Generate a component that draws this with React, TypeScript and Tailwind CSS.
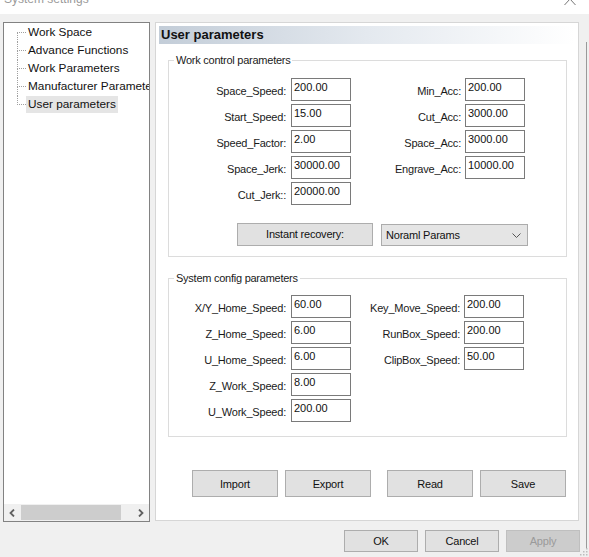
import React from 'react';

// Tree items on the left side of the settings dialog
const treeItems = [
  { label: 'Work Space' },
  { label: 'Advance Functions' },
  { label: 'Work Parameters' },
  { label: 'Manufacturer Parameters' },
  { label: 'User parameters', selected: true },
];

const workLeft = [
  ['Space_Speed:', '200.00'],
  ['Start_Speed:', '15.00'],
  ['Speed_Factor:', '2.00'],
  ['Space_Jerk:', '30000.00'],
  ['Cut_Jerk::', '20000.00'],
];

const workRight = [
  ['Min_Acc:', '200.00'],
  ['Cut_Acc:', '3000.00'],
  ['Space_Acc:', '3000.00'],
  ['Engrave_Acc:', '10000.00'],
];

const sysLeft = [
  ['X/Y_Home_Speed:', '60.00'],
  ['Z_Home_Speed:', '6.00'],
  ['U_Home_Speed:', '6.00'],
  ['Z_Work_Speed:', '8.00'],
  ['U_Work_Speed:', '200.00'],
];

const sysRight = [
  ['Key_Move_Speed:', '200.00'],
  ['RunBox_Speed:', '200.00'],
  ['ClipBox_Speed:', '50.00'],
];

// One "label: [value]" row
const Field = ({ label, value, labelWidth, gap }: { label: string; value: string; labelWidth: string; gap: string }) => (
  <div className="flex h-[23px]">
    <div className={`${labelWidth} ${gap} flex items-center justify-end pt-[3px] whitespace-nowrap tracking-[-0.2px] text-[#1a1a1a]`}>
      {label}
    </div>
    <div className="w-[60px] h-[23px] border border-[#7a7a7a] bg-white px-[2px] pt-[1px] leading-[14px] text-[#111]">
      {value}
    </div>
  </div>
);

const Column = ({ rows, labelWidth, gap }: { rows: string[][]; labelWidth: string; gap: string }) => (
  <div className="flex flex-col gap-[3px]">
    {rows.map(([l, v]) => (
      <Field key={l} label={l} value={v} labelWidth={labelWidth} gap={gap} />
    ))}
  </div>
);

const Chevron = ({ dir }: { dir: 'left' | 'right' }) => (
  <svg width="7" height="8" viewBox="0 0 7 8">
    <path
      d={dir === 'left' ? 'M5 0.5 L1.5 4 L5 7.5' : 'M2 0.5 L5.5 4 L2 7.5'}
      fill="none"
      stroke="#606060"
      strokeWidth="1.8"
    />
  </svg>
);

const App = () => {
  const btn = 'flex items-center justify-center bg-[#e1e1e1] border border-[#adadad] text-[#111] tracking-[-0.2px]';

  return (
    <div className="relative w-[589px] h-[557px] overflow-hidden bg-[#f0f0f0] font-['Liberation_Sans',Arial,sans-serif] text-[11px] text-black">
      {/* Window title strip (cut off at the top) */}
      <div className="flex justify-between h-[14px] bg-white overflow-hidden pl-[4px] pr-[12px]">
        <span className="block text-[12px] leading-[14px] mt-[-8px] text-[#9a9a9a]">System settings</span>
        <svg width="14" height="6" viewBox="0 0 14 6">
          <path d="M7 -1 L1.5 5 M7 -1 L12.5 5" stroke="#777" strokeWidth="1" fill="none" />
        </svg>
      </div>

      <div className="flex mt-[8px] pl-[3px]">
        {/* Tree view */}
        <div className="w-[147px] h-[500px] border border-[#828282] bg-white flex flex-col">
          <div className="flex-1 overflow-hidden pt-[1px] text-[11.8px] text-[#111]">
            {treeItems.map((item, i) => (
              <div key={item.label} className="flex h-[18px] whitespace-nowrap">
                <div className="w-[22px] h-full shrink-0">
                  <div className="ml-[13px] w-[9px] h-full flex flex-col">
                    <div
                      className={`h-[9px] border-b border-dotted border-[#a0a0a0] ${
                        i > 0 ? 'border-l' : ''
                      }`}
                    />
                    <div
                      className={`flex-1 border-dotted border-[#a0a0a0] ${
                        i < treeItems.length - 1 ? 'border-l' : ''
                      }`}
                    />
                  </div>
                </div>
                <span
                  className={`h-[17px] leading-[17px] px-[2px] ${
                    item.selected ? 'bg-[#e5e5e5]' : ''
                  }`}
                >
                  {item.label}
                </span>
              </div>
            ))}
          </div>
          {/* Horizontal scrollbar */}
          <div className="flex h-[17px] bg-[#f0f0f0]">
            <div className="w-[17px] flex items-center justify-center">
              <Chevron dir="left" />
            </div>
            <div className="flex-1 py-[1px]">
              <div className="w-[100px] h-full bg-[#cdcdcd]" />
            </div>
            <div className="w-[17px] flex items-center justify-center">
              <Chevron dir="right" />
            </div>
          </div>
        </div>

        {/* Settings page */}
        <div className="ml-[5px] w-[424px] h-[499px] border border-[#d6d6d6] bg-white p-[3px] flex flex-col">
          <div className="h-[18px] bg-linear-to-r from-[#c3cdd8] via-[#e4e9ef] to-white pl-[2px] text-[13px] font-bold leading-[18px] text-[#111]">
            User parameters
          </div>

          <fieldset className="ml-[9px] mt-[10px] w-[399px] border border-[#dcdcdc] pb-[10px]">
            <legend className="ml-[5px] px-[2px] leading-[13px] tracking-[-0.25px] text-[#1a1a1a]">Work control parameters</legend>
            <div className="flex pt-[11px]">
              <Column rows={workLeft} labelWidth="w-[117px]" gap="mr-[5px]" />
              <Column rows={workRight} labelWidth="w-[110px]" gap="mr-[4px]" />
            </div>
            <div className="flex items-start mt-[18px]">
              <div className={`${btn} ml-[68px] w-[136px] h-[23px]`}>Instant recovery:</div>
              <div className="ml-[8px] mt-[1px] w-[147px] h-[22px] flex items-center justify-between bg-[#e5e5e5] border border-[#acacac] pl-[4px] pr-[6px] text-[#111]">
                <span className="tracking-[-0.2px]">Noraml Params</span>
                <svg width="9" height="5" viewBox="0 0 9 5">
                  <path d="M0.5 0.5 L4.5 4.5 L8.5 0.5" fill="none" stroke="#555" strokeWidth="1" />
                </svg>
              </div>
            </div>
          </fieldset>

          <fieldset className="ml-[9px] mt-[15px] w-[399px] border border-[#dcdcdc] pb-[14px]">
            <legend className="ml-[5px] px-[2px] leading-[13px] tracking-[-0.25px] text-[#1a1a1a]">System config parameters</legend>
            <div className="flex pt-[10px]">
              <Column rows={sysLeft} labelWidth="w-[117px]" gap="mr-[5px]" />
              <Column rows={sysRight} labelWidth="w-[109px]" gap="mr-[4px]" />
            </div>
          </fieldset>

          <div className="flex ml-[33px] mt-[33px]">
            <div className={`${btn} w-[86px] h-[27px] pt-[2px]`}>Import</div>
            <div className={`${btn} w-[86px] h-[27px] pt-[2px] ml-[7px]`}>Export</div>
            <div className={`${btn} w-[86px] h-[27px] pt-[2px] ml-[16px]`}>Read</div>
            <div className={`${btn} w-[86px] h-[27px] pt-[2px] ml-[7px]`}>Save</div>
          </div>
        </div>
      </div>

      {/* Dialog buttons */}
      <div className="flex justify-end gap-[7px] mt-[8px] pr-[9px]">
        <div className={`${btn} w-[74px] h-[22px]`}>OK</div>
        <div className={`${btn} w-[74px] h-[22px]`}>Cancel</div>
        <div className="flex items-center justify-center w-[74px] h-[22px] bg-[#cccccc] border border-[#bfbfbf] text-[#9a9a9a] tracking-[-0.2px]">
          Apply
        </div>
      </div>

      {/* Edge of window behind + resize grip */}
      <div className="absolute left-[586px] top-[42px] w-px h-[506px] bg-[#9a9a9a]" />
      <svg className="absolute right-[1px] bottom-[1px]" width="8" height="8" viewBox="0 0 8 8">
        <rect x="6" y="0" width="1.5" height="1.5" fill="#bdbdbd" />
        <rect x="3" y="3" width="1.5" height="1.5" fill="#bdbdbd" />
        <rect x="6" y="3" width="1.5" height="1.5" fill="#bdbdbd" />
        <rect x="0" y="6" width="1.5" height="1.5" fill="#bdbdbd" />
        <rect x="3" y="6" width="1.5" height="1.5" fill="#bdbdbd" />
        <rect x="6" y="6" width="1.5" height="1.5" fill="#bdbdbd" />
      </svg>
    </div>
  );
};

export default App;
